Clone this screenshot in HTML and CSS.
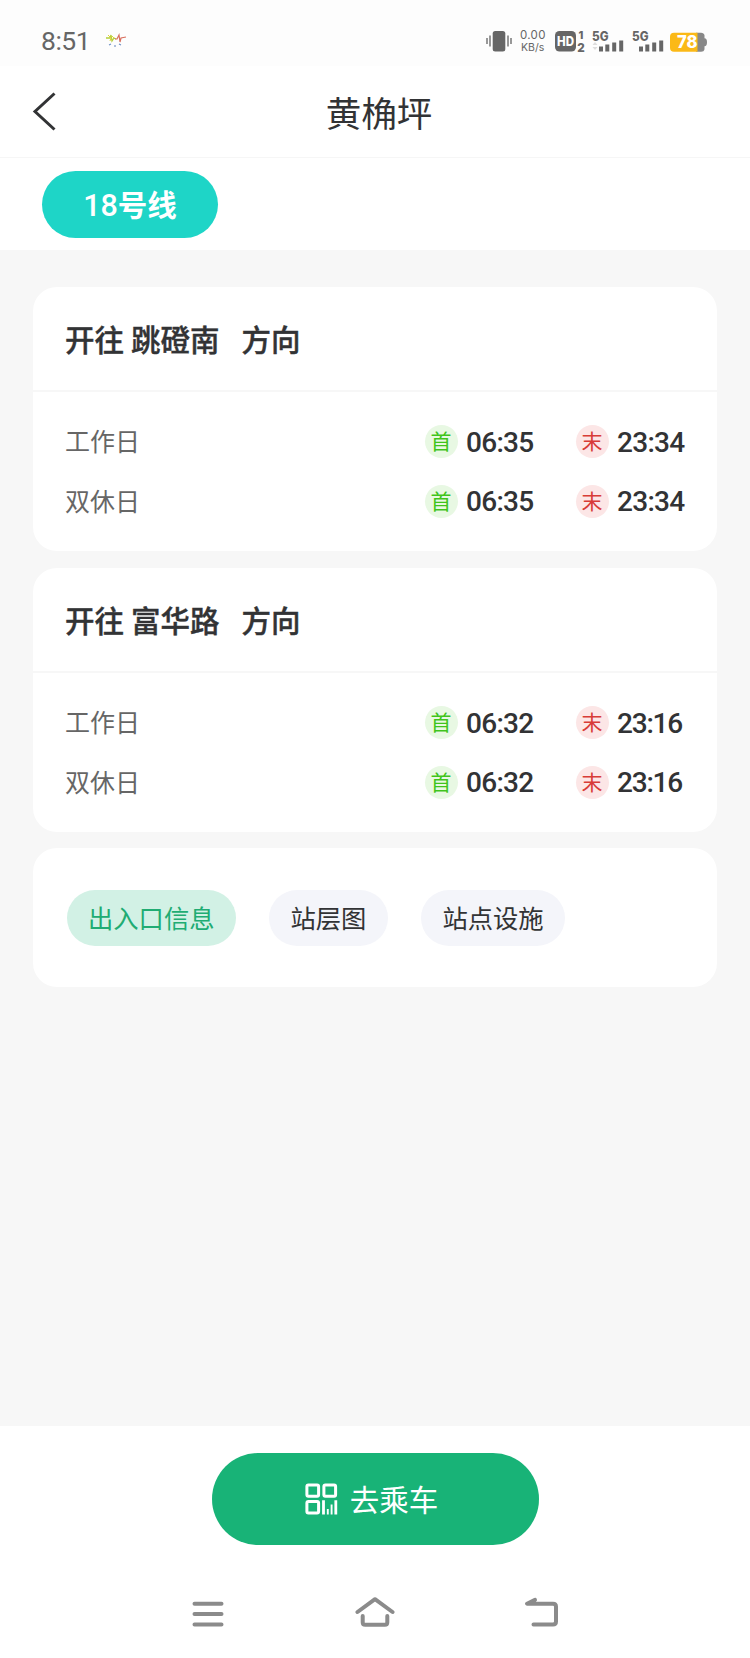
FILE: index.html
```
<!DOCTYPE html>
<html lang="zh-CN">
<head>
<meta charset="utf-8">
<title>黄桷坪</title>
<link rel="stylesheet" href="styles.css">
</head>
<body>
<div class="screen">
  <div class="status">
    <span class="clock">8:51</span>
    <svg class="app-mark" width="22" height="18" viewBox="0 0 22 18" fill="none">
      <path d="M1 6h4l1-3 1 6 2-3 2 1" stroke="#b5cf3c" stroke-width="1.3"/>
      <path d="M3 3l3 3-1 3M7 4l2 2" stroke="#e0d23a" stroke-width="1"/>
      <path d="M10 7l2 0 2-4 1 7 1-4 5-1" stroke="#d9705f" stroke-width="1.2"/>
      <path d="M4 13l2-1M10 13v2M14 12l2 1" stroke="#6d8fc4" stroke-width="1.1"/>
    </svg>
    <div class="status-icons">
      <svg class="i-vibrate" width="26" height="24" viewBox="0 0 26 24">
        <rect x="6.700" y="2" width="12.600" height="20.500" rx="2.500" fill="#666"/>
        <path d="M1 9v6M4 6.500v11M22 6.500v11M25 9v6" stroke="#777" stroke-width="1.500"/>
      </svg>
      <div class="speed"><span>0.00</span><span>KB/s</span></div>
      <svg class="i-hd" width="30" height="24" viewBox="0 0 30 24">
        <rect x="0" y="2" width="21" height="20.500" rx="4.500" fill="#666"/>
        <text x="2" y="17" class="bold" font-size="13" fill="#fff" textLength="17" lengthAdjust="spacingAndGlyphs">HD</text>
        <text x="23.500" y="9.800" class="bold" font-size="11" fill="#666">1</text>
        <text x="22.300" y="22.500" class="bold" font-size="12" fill="#666" textLength="7.500" lengthAdjust="spacingAndGlyphs">2</text>
      </svg>
      <svg class="i-signal" width="32" height="24" viewBox="0 0 32 24">
        <text x="0" y="11.800" class="bold" font-size="13" fill="#666" textLength="16.500" lengthAdjust="spacingAndGlyphs">5G</text>
        <path d="M3 13l2.500 3h-5zM3 21l2.500-3h-5z" fill="#ddd"/>
        <path d="M7 17.500h4v5h-4zM13.300 15.500h4v7h-4zM20.200 13.500h4v9h-4zM27.200 11.500h4v11h-4z" fill="#666"/>
      </svg>
      <svg class="i-signal2" width="32" height="24" viewBox="0 0 32 24">
        <text x="0" y="11.800" class="bold" font-size="13" fill="#666" textLength="16.500" lengthAdjust="spacingAndGlyphs">5G</text>
        <path d="M7 17.500h4v5h-4zM13.300 15.500h4v7h-4zM20.200 13.500h4v9h-4zM27.200 11.500h4v11h-4z" fill="#666"/>
      </svg>
      <svg class="i-battery" width="38" height="24" viewBox="0 0 38 24">
        <path d="M26 3.700h5q3 0 3.500 2.500v3q2.500 0 2.500 4t-2.500 4v3q-.5 2.500-3.500 2.500h-5z" fill="#888"/>
        <path d="M4 3.700h23.500v19H4q-4 0-4-4v-11q0-4 4-4z" fill="#fbb917"/>
        <text x="7" y="19.300" class="bold" font-size="17" fill="#fff" textLength="20.500" lengthAdjust="spacingAndGlyphs">78</text>
      </svg>
    </div>
  </div>
  <header class="header">
    <svg class="back" width="24" height="40" viewBox="0 0 24 40" fill="none" stroke="#323335" stroke-width="3">
      <path d="M22.500 1.500L3 19.500 22.500 37.500"/>
    </svg>
    <h1 class="title">黄桷坪</h1>
  </header>
  <div class="lines"><span class="line-pill"><b class="line-number">18</b>号线</span></div>

  <main class="content">
    <section class="card">
      <h2 class="direction"><span>开往</span><span class="dest">跳磴南</span><span>方向</span></h2>
      <div class="times">
        <div class="row"><span class="day">工作日</span><i class="tag first">首</i><b class="time">06:35</b><i class="tag last">末</i><b class="time">23:34</b></div>
        <div class="row"><span class="day">双休日</span><i class="tag first">首</i><b class="time">06:35</b><i class="tag last">末</i><b class="time">23:34</b></div>
      </div>
    </section>
    <section class="card">
      <h2 class="direction"><span>开往</span><span class="dest">富华路</span><span>方向</span></h2>
      <div class="times">
        <div class="row"><span class="day">工作日</span><i class="tag first">首</i><b class="time">06:32</b><i class="tag last">末</i><b class="time narrow">23:16</b></div>
        <div class="row"><span class="day">双休日</span><i class="tag first">首</i><b class="time">06:32</b><i class="tag last">末</i><b class="time narrow">23:16</b></div>
      </div>
    </section>
    <section class="card chips">
      <span class="chip active">出入口信息</span>
      <span class="chip">站层图</span>
      <span class="chip">站点设施</span>
    </section>
  </main>

  <footer class="footer">
    <div class="ride">
      <svg width="33" height="33" viewBox="0 0 33 33" fill="none" stroke="#fff" stroke-width="3">
        <rect x="1.900" y="1.900" width="11.700" height="11.400" rx="1.500"/>
        <rect x="18.900" y="1.900" width="11.700" height="11.400" rx="1.500"/>
        <rect x="1.900" y="18.600" width="11.700" height="11.400" rx="1.500"/>
        <path d="M18.500 17.200v14.200M30.800 17.200v14.200" stroke-width="2.800"/>
        <path d="M22.800 26v5.400M26.600 21.500v9.900" stroke-width="1.900"/>
      </svg>
      <span class="ride-label">去乘车</span>
    </div>
  </footer>
  <nav class="nav">
    <svg width="40" height="40" viewBox="0 0 40 40" fill="none" stroke="#8b8b8b" stroke-width="4" stroke-linecap="round">
      <path d="M6.500 9.700h27M6.500 19.900h27M6.500 30.500h27"/>
    </svg>
    <svg width="40" height="40" viewBox="0 0 40 40" fill="none" stroke="#8b8b8b" stroke-width="4" stroke-linecap="round" stroke-linejoin="round">
      <path d="M2.500 18L20 5.200 37.500 18M7.700 22v6.300q0 2.500 2.500 2.500h19.600q2.500 0 2.500-2.500V22"/>
    </svg>
    <svg width="40" height="40" viewBox="0 0 40 40" fill="none" stroke="#8b8b8b" stroke-width="4" stroke-linecap="round" stroke-linejoin="round">
      <path d="M13 5.900L5 9.700h26q3 0 3 3v14.800q0 3-3 3H11.500"/>
    </svg>
  </nav>
</div>
</body>
</html>
```
FILE: styles.css
```
* { box-sizing: border-box; }
body {
  margin: 0;
  background: #fff;
  color: #323335;
  font-family: "Noto Sans CJK SC", sans-serif;
}
.screen { display: flex; flex-direction: column; width: 750px; height: 1658px; }
svg { display: block; flex: none; }
.bold { font-family: Inter, sans-serif; font-weight: 800; }

.status {
  display: flex;
  align-items: center;
  height: 66px;
  padding: 16px 42px 0 41px;
  background: #fdfdfd;
}
.clock { width: 64px; font: 26.500px/32px Roboto, sans-serif; letter-spacing: -.5px; color: #666; }
.status-icons { display: flex; align-items: center; margin-left: auto; }
.i-vibrate { margin-right: 8px; }
.speed {
  display: flex;
  flex-direction: column;
  width: 27px;
  margin-right: 8px;
  padding-top: 1px;
  font: 11.5px/11.5px Inter, sans-serif;
  color: #666;
  white-space: nowrap;
}
.speed span:first-child { letter-spacing: .3px; }
.speed span:last-child { padding-left: 1px; font-size: 10.500px; }
.i-hd { margin-right: 7px; }
.i-signal { margin-right: 8px; }
.i-signal2 { margin-right: 6px; }

.header {
  display: flex;
  align-items: center;
  height: 92px;
  padding: 0 32px;
  border-bottom: 1px solid #f6f6f6;
}
.title {
  flex: 1;
  margin: 1px 16px 0 0;
  font-size: 35.500px;
  font-weight: 400;
  line-height: 50px;
  text-align: center;
}
.lines { display: flex; height: 92px; padding: 13px 42px; }
.line-pill {
  width: 176px;
  height: 67px;
  border-radius: 34px;
  background: #1ed5c7;
  color: #fff;
  font-size: 29.500px;
  font-weight: 700;
  line-height: 65px;
  text-align: center;
}
.line-number { font-family: Roboto, sans-serif; font-weight: 500; font-size: 30.500px; }

.content {
  display: flex;
  flex: 1;
  flex-direction: column;
  gap: 17px;
  padding: 37px 33px 0;
  background: #f7f7f7;
}
.card { border-radius: 24px; background: #fff; }
.direction {
  display: flex;
  height: 105px;
  margin: 0;
  padding-left: 32px;
  border-bottom: 2px solid #f7f7f7;
  font-size: 29.500px;
  font-weight: 500;
  line-height: 102px;
  -webkit-text-stroke: .4px #323335;
}
.dest { margin: 0 22px 0 7px; }
.times { padding: 20px 0 20px 32px; }
.row { display: flex; align-items: center; height: 59.500px; }
.day { flex: none; width: 359.500px; padding-bottom: 3px; font-size: 25px; color: #666; }
.tag {
  flex: none;
  width: 33px;
  height: 33px;
  border-radius: 50%;
  font-size: 21px;
  font-style: normal;
  line-height: 31px;
  text-align: center;
}
.first { background: #e8f8e3; color: #40c41c; }
.last { background: #fce6e6; color: #d83c37; }
.time {
  flex: none;
  width: 118px;
  padding: 2px 0 0 8.500px;
  font: 500 28px/32px Roboto, sans-serif;
  letter-spacing: -.7px;
}
.narrow { letter-spacing: -1.2px; }
.chips { display: flex; gap: 33px; height: 139px; margin-top: -1px; padding: 42px 33.500px; }
.chip {
  height: 56px;
  padding: 0 21.500px;
  border-radius: 28px;
  background: #f4f5fa;
  font-size: 25.300px;
  line-height: 54px;
}
.active { background: #d2f1e5; color: #20ac73; }

.footer { display: flex; justify-content: center; height: 153px; padding-top: 27px; }
.ride {
  display: flex;
  align-items: center;
  justify-content: center;
  gap: 12px;
  width: 327px;
  height: 92px;
  padding-right: 7px;
  border-radius: 46px;
  background: #18b377;
  color: #fff;
  font-size: 29.500px;
}
.ride-label { padding-bottom: 2px; }
.nav { display: flex; justify-content: center; gap: 127px; height: 79px; padding-top: 15px; }
```
